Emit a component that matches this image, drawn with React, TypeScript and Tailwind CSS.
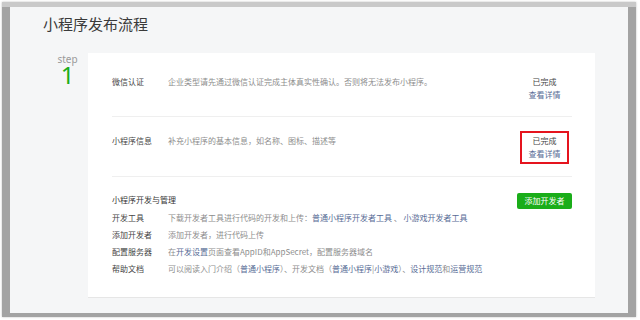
const font = { fontFamily: '"Noto Sans CJK SC", "Noto Sans", sans-serif' };

interface row {
    label: string;
    desc: string;
    boxed: boolean;
}

const rows: row[] = [
    { label: "微信认证", desc: "企业类型请先通过微信认证完成主体真实性确认。否则将无法发布小程序。", boxed: false },
    { label: "小程序信息", desc: "补充小程序的基本信息，如名称、图标、描述等", boxed: true },
];

function Link({ children }: { children: React.ReactNode }) {
    return <span className="text-[#576b95]">{children}</span>;
}

export default function App() {
    return (
        <div className="w-[640px] h-[320px] bg-white overflow-hidden" style={font}>
            <div className="mt-[2px] ml-[2px] w-[634px] h-[315px] bg-[#a3a3a3] border-t-[5px] border-t-[#c9c9c9] pl-[8px] pr-[8px] pb-[4px] shadow-[0_0_2px_#bdbdbd]">
                <div className="w-full h-full bg-[#f5f6f7] pl-[33px] pt-[6px]">
                    <h1 className="text-[15px] leading-[22px] text-[#3a3a3a] font-normal">小程序发布流程</h1>

                    <div className="flex mt-[18px]">
                        <div className="w-[45px] flex flex-col items-center pl-[4px]">
                            <div className="text-[10px] leading-[12px] text-[#9a9a9a]" style={{ fontFamily: '"Noto Sans", sans-serif' }}>step</div>
                            <div className="text-[24px] leading-[20px] text-[#1aad19]" style={{ fontFamily: '"Noto Sans", sans-serif' }}>1</div>
                        </div>

                        <div className="w-[507px] bg-white border-b border-[#e6e6e6] pl-[24px] pr-[23px] pb-[20px]">
                            {rows.map((r, i) => (
                                <div
                                    key={r.label}
                                    className={`flex items-start border-b border-[#efefef] ${i === 0 ? "pt-[19px] pb-[11px]" : "pt-[14px] pb-[12px]"}`}
                                >
                                    <div className="w-[56px] pt-[3px] text-[8px] leading-[13px] text-[#454545]">{r.label}</div>
                                    <div className="flex-1 pt-[3px] text-[8px] leading-[13px] text-[#8d8d8d]">{r.desc}</div>
                                    <div
                                        className={`w-[49px] mr-[3px] border-2 pt-[1px] pb-[2px] flex flex-col items-center text-[8px] leading-[13px] ${r.boxed ? "border-[#e5141e]" : "border-transparent"}`}
                                    >
                                        <span className="text-[#454545]">已完成</span>
                                        <span className="text-[#576b95]">查看详情</span>
                                    </div>
                                </div>
                            ))}

                            <div className="pt-[16px]">
                                <div className="flex justify-between items-start">
                                    <div className="text-[8px] leading-[13px] text-[#353535]">小程序开发与管理</div>
                                    <button className="h-[16px] w-[55px] bg-[#1aad19] rounded-[2px] text-white text-[8px] leading-[16px]">添加开发者</button>
                                </div>
                                <div className="text-[8px] leading-[17px]">
                                    <div className="flex">
                                        <div className="w-[56px] text-[#454545]">开发工具</div>
                                        <div className="text-[#8d8d8d]">
                                            下载开发者工具进行代码的开发和上传：<Link>普通小程序开发者工具</Link> 、 <Link>小游戏开发者工具</Link>
                                        </div>
                                    </div>
                                    <div className="flex">
                                        <div className="w-[56px] text-[#454545]">添加开发者</div>
                                        <div className="text-[#8d8d8d]">添加开发者，进行代码上传</div>
                                    </div>
                                    <div className="flex">
                                        <div className="w-[56px] text-[#454545]">配置服务器</div>
                                        <div className="text-[#8d8d8d]">
                                            在<Link>开发设置</Link>页面查看AppID和AppSecret，配置服务器域名
                                        </div>
                                    </div>
                                    <div className="flex">
                                        <div className="w-[56px] text-[#454545]">帮助文档</div>
                                        <div className="text-[#8d8d8d]">
                                            可以阅读入门介绍（<Link>普通小程序</Link>）、开发文档（<Link>普通小程序</Link>|<Link>小游戏</Link>）、<Link>设计规范</Link>和<Link>运营规范</Link>
                                        </div>
                                    </div>
                                </div>
                            </div>
                        </div>
                    </div>
                </div>
            </div>
        </div>
    );
}
